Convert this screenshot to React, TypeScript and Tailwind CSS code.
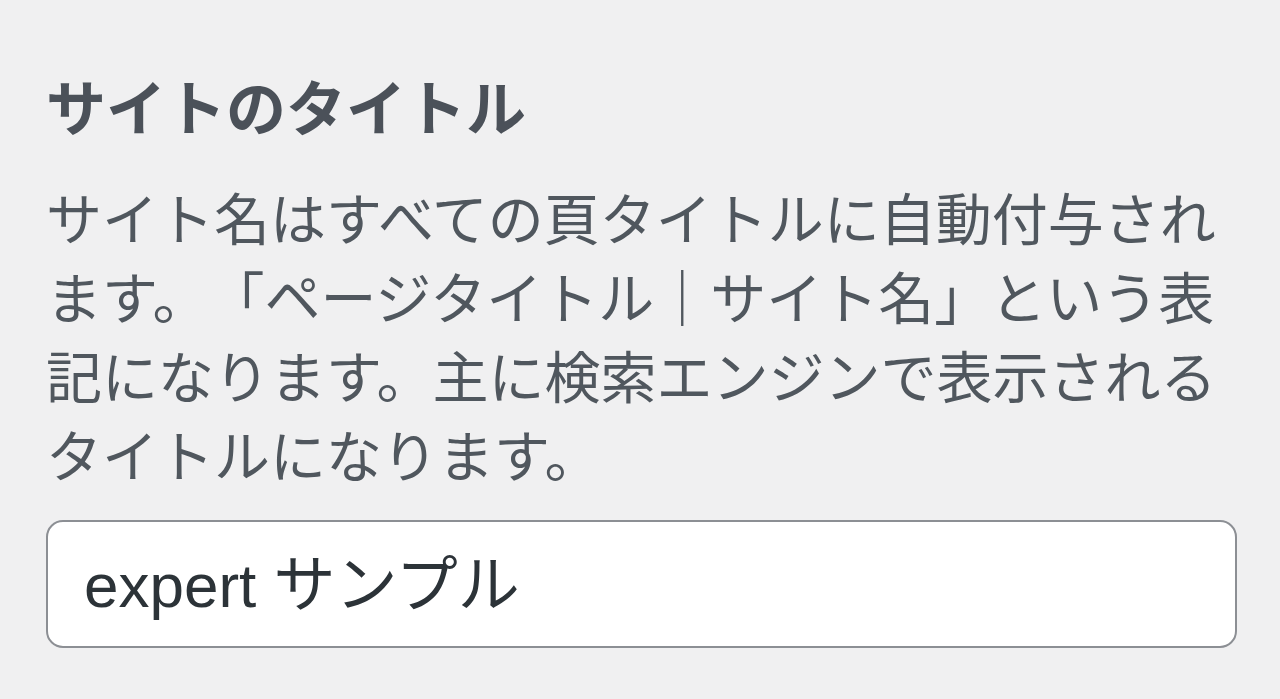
export default function App() {
  return (
    <div
      className="min-h-[699px] w-[1280px] bg-[#f0f0f1] pl-[46px] pt-[72px]"
      style={{ fontFamily: '"Liberation Sans", "Noto Sans CJK JP", sans-serif' }}
    >
      <div className="w-[1190px] [text-spacing-trim:space-all]">
        {/* Control title */}
        <h2 className="text-[60px] leading-[78px] font-bold text-[#4b5159]">サイトのタイトル</h2>

        {/* Description */}
        <p className="mt-[31px] text-[56px] leading-[79px] text-[#50575e]">
          サイト名はすべての頁タイトルに自動付与されます。「ページタイトル｜サイト名」という表記になります。主に検索エンジンで表示されるタイトルになります。
        </p>

        {/* Text input */}
        <input
          type="text"
          defaultValue="expert サンプル"
          className="mt-[23px] block h-[128px] w-[1191px] rounded-[17px] border-2 border-[#8c8f94] bg-white pb-[8px] pl-[36px] text-[62px] text-[#2c3338] outline-none"
          style={{ fontFamily: '"Liberation Sans", "Noto Sans CJK JP", sans-serif' }}
        />
      </div>
    </div>
  );
}
